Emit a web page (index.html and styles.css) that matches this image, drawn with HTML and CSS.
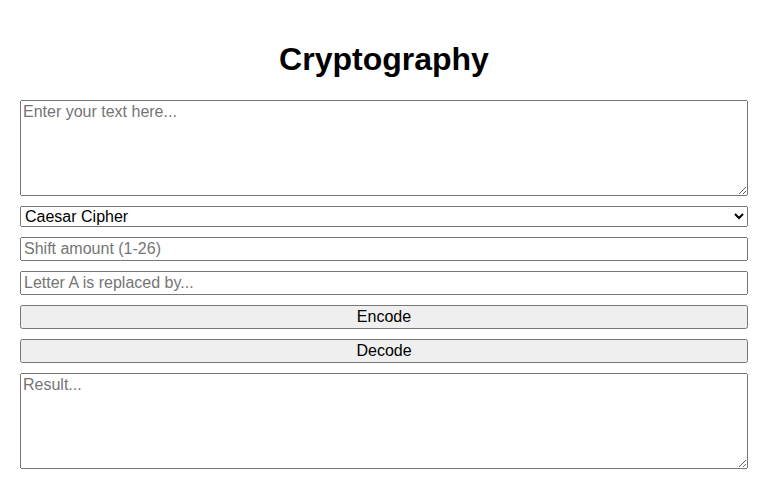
FILE: index.html
```html
<!DOCTYPE html>
<html>
<head>
<meta charset="utf-8">
<title>Cryptography</title>
<link rel="stylesheet" href="styles.css">
</head>
<body>
<h1 class="title">Cryptography</h1>
<textarea class="field area" placeholder="Enter your text here..."></textarea>
<select class="field select">
  <option>Caesar Cipher</option>
  <option>Substitution Cipher</option>
</select>
<input class="field input" type="number" placeholder="Shift amount (1-26)">
<input class="field input" type="text" placeholder="Letter A is replaced by...">
<button class="field btn">Encode</button>
<button class="field btn">Decode</button>
<textarea class="field area" placeholder="Result..." readonly></textarea>
</body>
</html>
```
FILE: styles.css
```css
html, body {
  margin: 0;
}
body {
  padding: 20px;
  font-family: "Liberation Sans", Arial, sans-serif;
  background: #fff;
  color: #000;
}
.title {
  text-align: center;
  font-size: 32px;
  margin: 21.44px 0;
}
.field {
  display: block;
  width: 100%;
  box-sizing: border-box;
  margin: 0 0 10px 0;
  font-family: "Liberation Sans", Arial, sans-serif;
  font-size: 16px;
}
.area {
  height: 96px;
}
.select {
  height: 21px;
}
.input {
  height: 24px;
}
.btn {
  height: 24px;
}
```
